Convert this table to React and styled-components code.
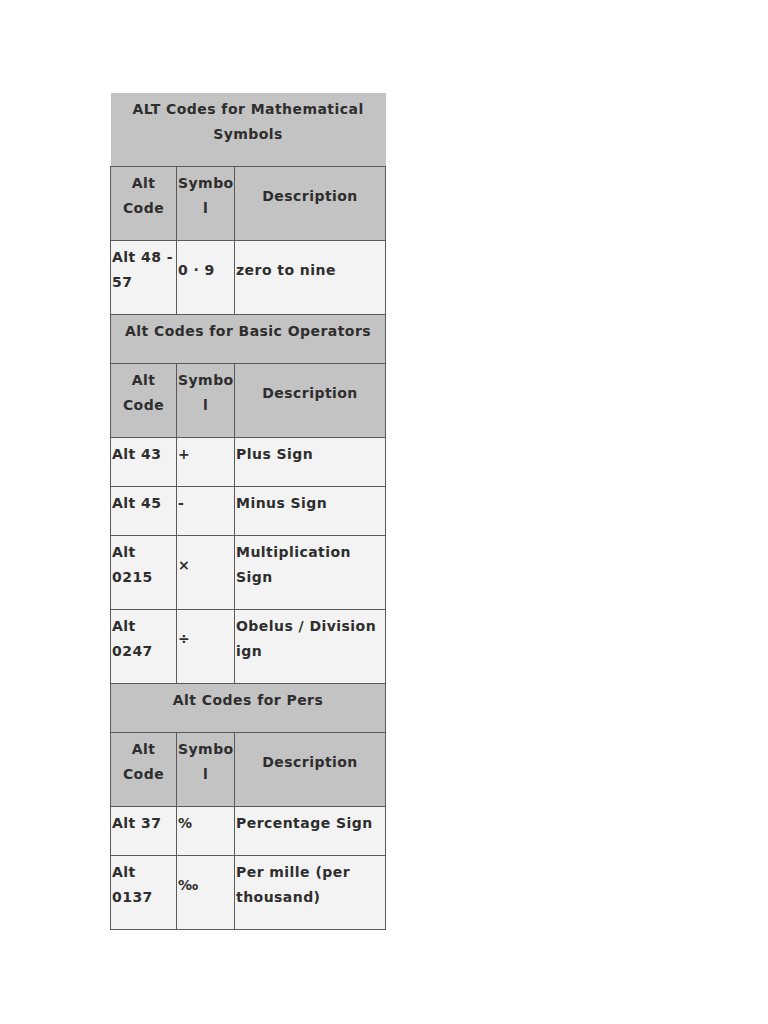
import styled, { createGlobalStyle } from 'styled-components';

const GlobalStyle = createGlobalStyle`
  html, body { margin: 0; padding: 0; background: #ffffff; }
  body { font-family: "DejaVu Sans", Verdana, sans-serif; }
`;

const Page = styled.div`
  padding: 93px 0 0 110px;
  min-height: 1024px;
  box-sizing: border-box;
`;

const Table = styled.table`
  width: 275px;
  border-collapse: collapse;
  table-layout: fixed;
  font-size: 14px;
  font-weight: 700;
  letter-spacing: 0.45px;
  line-height: 25px;
  color: #2e2e2e;
`;

const Cell = styled.td`
  border: 1px solid #5a5a5a;
  background: ${p => (p.$head ? '#c3c3c3' : '#f3f3f3')};
  text-align: ${p => (p.$center ? 'center' : 'left')};
  vertical-align: middle;
  padding: 4px 1px 19px;
  white-space: nowrap;
  overflow: hidden;
`;

const TitleCell = styled.td`
  background: #c3c3c3;
  text-align: center;
  vertical-align: middle;
  padding: 4px 1px 19px;
  white-space: nowrap;
  border: ${p => (p.$first ? 'none' : '1px solid #5a5a5a')};
  border-bottom: 1px solid #5a5a5a;
`;

const sections = [
  {
    title: <>ALT Codes for Mathematical<br />Symbols</>,
    first: true,
    rows: [
      [<>Alt 48 -<br />57</>, '0 · 9', 'zero to nine'],
    ],
  },
  {
    title: 'Alt Codes for Basic Operators',
    rows: [
      ['Alt 43', '+', 'Plus Sign'],
      ['Alt 45', '-', 'Minus Sign'],
      [<>Alt<br />0215</>, '×', <>Multiplication<br />Sign</>],
      [<>Alt<br />0247</>, '÷', <>Obelus / Division<br />ign</>],
    ],
  },
  {
    title: 'Alt Codes for Pers',
    rows: [
      ['Alt 37', '%', 'Percentage Sign'],
      [<>Alt<br />0137</>, '‰', <>Per mille (per<br />thousand)</>],
    ],
  },
];

function HeaderRow() {
  return (
    <tr>
      <Cell $head $center>Alt<br />Code</Cell>
      <Cell $head $center>Symbo<br />l</Cell>
      <Cell $head $center>Description</Cell>
    </tr>
  );
}

function SectionRows({ section }) {
  return (
    <>
      <tr>
        <TitleCell colSpan={3} $first={section.first}>{section.title}</TitleCell>
      </tr>
      <HeaderRow />
      {section.rows.map((r, j) => (
        <tr key={j}>
          <Cell>{r[0]}</Cell>
          <Cell>{r[1]}</Cell>
          <Cell>{r[2]}</Cell>
        </tr>
      ))}
    </>
  );
}

export default function App() {
  return (
    <Page>
      <GlobalStyle />
      <Table>
        <colgroup>
          <col style={{ width: 66 }} />
          <col style={{ width: 58 }} />
          <col style={{ width: 151 }} />
        </colgroup>
        <tbody>
          {sections.map((s, i) => (
            <SectionRows key={i} section={s} />
          ))}
        </tbody>
      </Table>
    </Page>
  );
}
